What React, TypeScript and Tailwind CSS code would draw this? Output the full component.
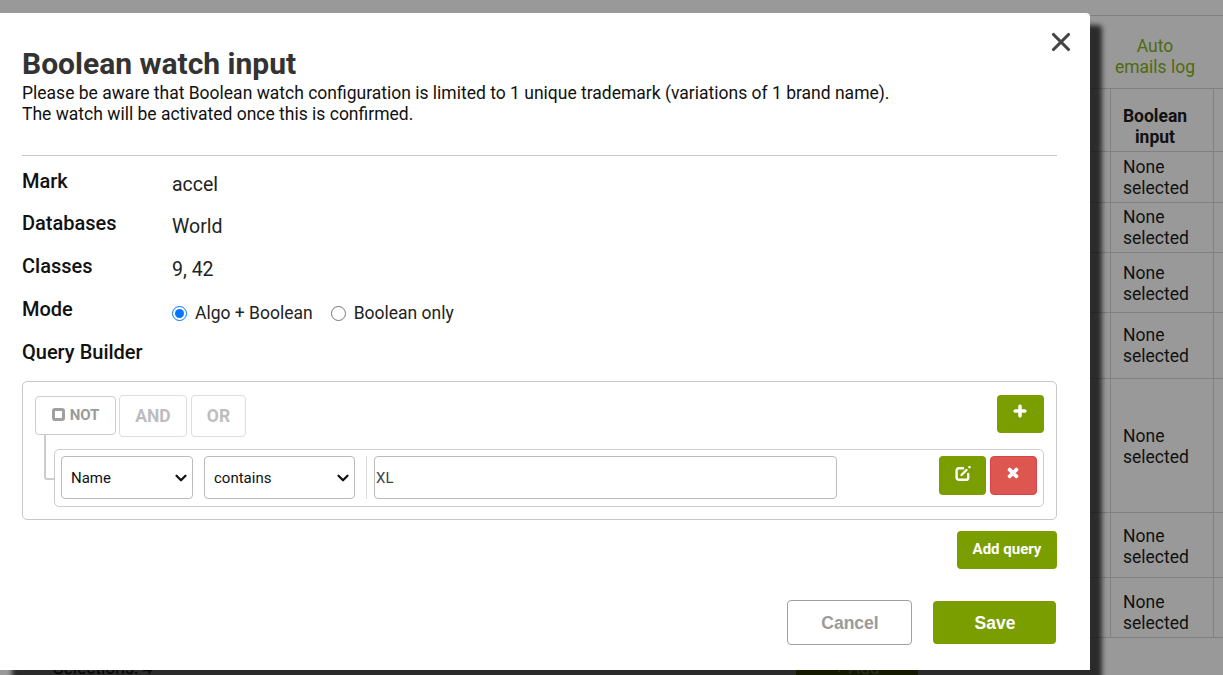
import { useState } from 'react';
import { ChevronDown, X } from 'lucide-react';
import { FaPlus, FaTimes } from 'react-icons/fa';

const rows = [
  { h: 'h-[51px]', pt: 'pt-[5px]' },
  { h: 'h-[50px]', pt: 'pt-[4px]' },
  { h: 'h-[60px]', pt: 'pt-[10px]' },
  { h: 'h-[66px]', pt: 'pt-[12px]' },
  { h: 'h-[134px]', pt: 'pt-[47px]' },
  { h: 'h-[65px]', pt: 'pt-[13px]' },
  { h: 'h-[60px]', pt: 'pt-[14px]' },
];

const details = [
  { label: 'Mark', value: 'accel', h: 'h-[41px]' },
  { label: 'Databases', value: 'World', h: 'h-[43px]' },
  { label: 'Classes', value: '9, 42', h: 'h-[43px]' },
];

function BackgroundPage() {
  return (
    <div className="flex flex-col pt-[15px] text-[17.5px] leading-[21px] text-[#111]">
      <div className="h-[74px] border-y border-[#808080] pl-[1110px]">
        <div className="w-[90px] pt-[20px] text-center text-[#4f6a10]">Auto<br />emails log</div>
      </div>
      <div className="flex h-[63px] border-b border-[#808080] pl-[1110px]">
        <div className="w-[104px] border-x border-[#808080] pr-[14px] pt-[17px] text-center font-bold">Boolean<br />input</div>
      </div>
      {rows.map((row) => (
        <div key={row.h + row.pt} className={`flex border-b border-[#808080] pl-[1110px] ${row.h}`}>
          <div className={`w-[104px] border-x border-[#808080] pl-[12px] ${row.pt}`}>None<br />selected</div>
        </div>
      ))}
      <div className="flex pl-[53px] pt-[20px]">
        <span className="w-[743px]">Selections: 4</span>
        <span className="-mt-[10px] h-[60px] w-[122px] bg-[#4a5f00] pt-[10px] text-center text-[#999]">+ Add</span>
      </div>
    </div>
  );
}

function SelectBox({ value, width }: { value: string; width: string }) {
  return (
    <div className={`relative h-[43px] ${width}`}>
      <select defaultValue={value} className="h-full w-full appearance-none rounded-[4px] border border-[#bbb] bg-white pl-[9px] pt-[2px] text-[15px] text-[#111]">
        <option>{value}</option>
      </select>
      <ChevronDown size={18} strokeWidth={3} className="pointer-events-none absolute right-[3px] top-[13px] text-[#111]" />
    </div>
  );
}

function EditIcon() {
  return (
    <svg width="16" height="15" viewBox="0 0 16 15" fill="none" stroke="currentColor" strokeWidth="2.4" strokeLinecap="round">
      <path d="M8 2.2H4A2.4 2.4 0 0 0 1.6 4.6v6.8a2.4 2.4 0 0 0 2.4 2.4h6.8a2.4 2.4 0 0 0 2.4-2.4V8" />
      <path d="M6.5 9L11.5 4" />
      <path d="M14.5 1.2L14.6 1.1" />
    </svg>
  );
}

function Dialog() {
  const [mode, setMode] = useState('algo');

  return (
    <div className="absolute left-0 top-[13px] h-[657px] w-[1090px] rounded-tr-[4px] bg-white pl-[22px] pr-[33px] pt-[33px] shadow-[12px_12px_5px_rgba(0,0,0,0.72)]">
      <button className="absolute right-[14px] top-[14px] text-[#444]">
        <X size={30} strokeWidth={2.5} />
      </button>

      <h1 className="text-[30px] font-bold leading-[36px] text-[#333]">Boolean watch input</h1>
      <p className="pt-px text-[17.5px] leading-[21px] text-[#111]">
        Please be aware that Boolean watch configuration is limited to 1 unique trademark (variations of 1 brand name).
        <br />
        The watch will be activated once this is confirmed.
      </p>
      <div className="mt-[30px] border-t border-[#c8c8c8]" />

      <div className="mt-[6px] flex flex-col">
        {details.map((d) => (
          <div key={d.label} className={`flex items-center ${d.h}`}>
            <span className="w-[150px] -translate-y-[2px] text-[20px] font-medium text-[#111]">{d.label}</span>
            <span className="translate-y-[2px] text-[19.5px] text-[#222]">{d.value}</span>
          </div>
        ))}
        <div className="flex h-[43px] items-center">
          <span className="w-[150px] -translate-y-[2px] text-[20px] font-medium text-[#111]">Mode</span>
          <label className="flex translate-y-[3px] items-center gap-[8px] text-[17.5px] text-[#222]">
            <input type="radio" name="mode" checked={mode === 'algo'} onChange={() => setMode('algo')} className="m-0 h-[15px] w-[15px]" />
            Algo + Boolean
          </label>
          <label className="ml-[18px] flex translate-y-[3px] items-center gap-[8px] text-[17.5px] text-[#222]">
            <input type="radio" name="mode" checked={mode === 'bool'} onChange={() => setMode('bool')} className="m-0 h-[15px] w-[15px]" />
            Boolean only
          </label>
        </div>
        <div className="flex h-[43px] items-center">
          <span className="-translate-y-[2px] text-[20px] font-medium text-[#111]">Query Builder</span>
        </div>
      </div>

      <div className="relative mt-[6px] h-[139px] rounded-[5px] border border-[#c8c8c8] pl-[12px] pr-[12px] pt-[13px]">
        <div className="flex items-start justify-between">
          <div className="flex items-start gap-[3px]">
            <button className="mt-px flex h-[39px] w-[81px] items-center justify-center gap-[5px] rounded-[4px] border border-[#ccc] text-[15px] font-bold text-[#9a9a9a]">
              <span className="mb-[3px] h-[13px] w-[13px] rounded-[3px] border-[3px] border-[#a0a0a0]" />
              NOT
            </button>
            <button className="h-[42px] w-[68px] rounded-[4px] border border-[#ddd] text-[17.5px] font-bold text-[#bdbdbd]">AND</button>
            <button className="ml-px h-[42px] w-[55px] rounded-[4px] border border-[#ddd] text-[17.5px] font-bold text-[#bdbdbd]">OR</button>
          </div>
          <button className="flex h-[38px] w-[47px] items-center justify-center rounded-[4px] bg-[#7a9d00] pb-[7px] pr-[2px] text-white">
            <FaPlus size={14} stroke="currentColor" strokeWidth={30} />
          </button>
        </div>

        <div className="absolute left-[21px] top-[53px] h-[45px] w-[11px] rounded-bl-[3px] border-b-2 border-l-2 border-[#ccc]" />

        <div className="ml-[19px] mt-[12px] flex h-[58px] items-start rounded-[5px] border border-[#ccc] pl-[6px] pr-[6px] pt-[6px]">
          <SelectBox value="Name" width="w-[132px]" />
          <div className="ml-[11px]">
            <SelectBox value="contains" width="w-[151px]" />
          </div>
          <div className="ml-[11px] h-[43px] border-l border-[#ddd]" />
          <input defaultValue="XL" className="ml-[7px] h-[43px] w-[463px] rounded-[4px] border border-[#bbb] pl-[1px] text-[15px] text-[#444] outline-none" />
          <button className="ml-[102px] flex h-[39px] w-[47px] items-center justify-center rounded-[4px] bg-[#7a9d00] pb-[5px] text-white">
            <EditIcon />
          </button>
          <button className="ml-[4px] flex h-[39px] w-[47px] items-center justify-center rounded-[4px] border border-[#d9434a] bg-[#de5650] pb-[6px] pr-px text-white">
            <FaTimes size={14} stroke="currentColor" strokeWidth={40} />
          </button>
        </div>
      </div>

      <div className="mt-[11px] flex justify-end">
        <button className="h-[38px] w-[100px] rounded-[4px] bg-[#7a9d00] pb-[2px] text-[15px] font-bold text-white">Add query</button>
      </div>

      <div className="mt-[31px] flex items-start justify-end gap-[21px] pr-px">
        <button className="h-[45px] w-[125px] rounded-[4px] border border-[#a0a0a0] bg-white pl-px pt-px font-['Liberation_Sans',sans-serif] text-[17.5px] font-bold text-[#9a9a9a]">Cancel</button>
        <button className="mt-px h-[43px] w-[123px] rounded-[4px] bg-[#7a9d00] pl-px pt-px font-['Liberation_Sans',sans-serif] text-[17.5px] font-bold text-white">Save</button>
      </div>
    </div>
  );
}

export default function App() {
  return (
    <div className="relative h-[675px] w-[1223px] overflow-hidden bg-[#999] font-['Roboto',sans-serif]">
      <BackgroundPage />
      <Dialog />
    </div>
  );
}
